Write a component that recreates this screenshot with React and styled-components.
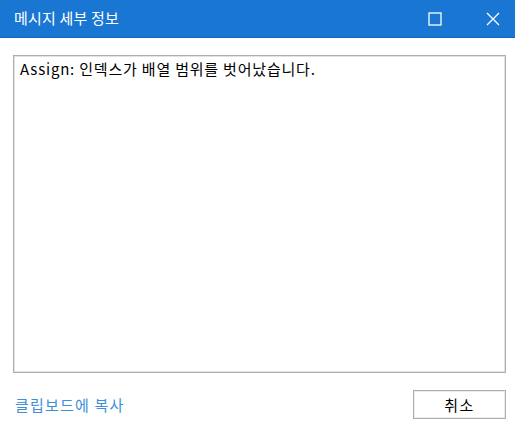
import React from "react";
import styled, { createGlobalStyle } from "styled-components";

const Global = createGlobalStyle`
  html, body { margin: 0; padding: 0; background: #ffffff; }
  body { font-family: "Noto Sans CJK KR", "Noto Sans", sans-serif; }
  * { box-sizing: border-box; }
`;

const Window = styled.div`
  width: 515px;
  height: 430px;
  display: flex;
  flex-direction: column;
  background: #ffffff;
  overflow: hidden;
`;

const TitleBar = styled.div`
  height: 38px;
  flex: none;
  background: #1976d2;
  border-bottom: 1px solid #1565c0;
  display: flex;
  align-items: center;
  padding-left: 14px;
`;

const Title = styled.div`
  flex: 1;
  color: #ffffff;
  font-size: 15px;
  letter-spacing: 0.2px;
  line-height: 1;
  margin-top: -2px;
`;

const CtrlButton = styled.div`
  width: 46px;
  height: 37px;
  display: flex;
  align-items: center;
  justify-content: center;
  margin-right: ${(p) => p.$mr || 0}px;
`;

const Body = styled.div`
  flex: 1;
  display: flex;
  flex-direction: column;
  padding: 17px 9px 12px 13px;
`;

const TextArea = styled.div`
  height: 318px;
  border: 1px solid #adadad;
  box-shadow: inset 0 0 0 1px #e3e3e3;
  padding: 3px 6px;
  font-size: 15px;
  letter-spacing: 0.8px;
  color: #000000;
  line-height: 20px;
`;

const Footer = styled.div`
  display: flex;
  align-items: center;
  justify-content: space-between;
  margin-top: 17px;
  padding-left: 2px;
`;

const Link = styled.span`
  color: #3d8fd8;
  font-size: 15px;
  letter-spacing: 1.2px;
`;

const Button = styled.div`
  width: 93px;
  height: 29px;
  border: 1px solid #adadad;
  box-shadow: inset 0 0 0 1px #ececec;
  display: flex;
  align-items: center;
  justify-content: center;
  font-size: 15px;
  letter-spacing: 1.5px;
  color: #000;
`;

export default function App() {
  return (
    <>
      <Global />
      <Window>
        <TitleBar>
          <Title>메시지 세부 정보</Title>
          <CtrlButton $mr={12}>
            <svg width="14" height="14" viewBox="0 0 14 14">
              <rect x="1" y="1" width="12" height="12" fill="none" stroke="#fff" strokeWidth="1.3" />
            </svg>
          </CtrlButton>
          <CtrlButton $mr={-1}>
            <svg width="14" height="14" viewBox="0 0 14 14">
              <path d="M1 1 L13 13 M13 1 L1 13" stroke="#fff" strokeWidth="1.3" />
            </svg>
          </CtrlButton>
        </TitleBar>
        <Body>
          <TextArea>Assign: 인덱스가 배열 범위를 벗어났습니다.</TextArea>
          <Footer>
            <Link>클립보드에 복사</Link>
            <Button>취소</Button>
          </Footer>
        </Body>
      </Window>
    </>
  );
}
